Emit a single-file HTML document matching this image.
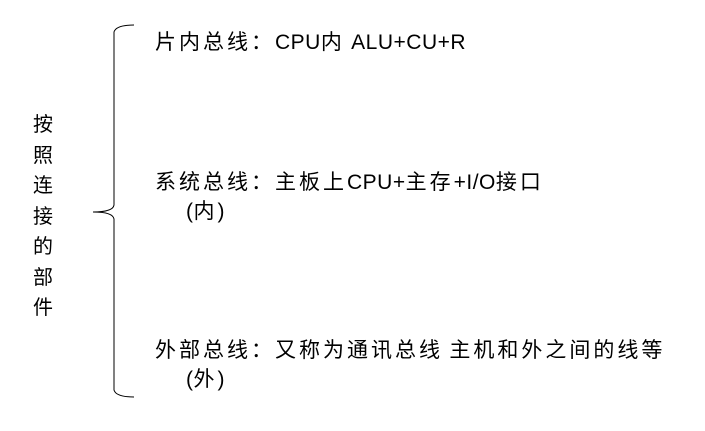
<!DOCTYPE html>
<html><head><meta charset="utf-8"><style>
body{margin:0;width:705px;height:431px;background:#fff;position:relative;overflow:hidden;font-family:"Liberation Sans","Noto Sans CJK SC",sans-serif;color:#000}
.t{position:absolute;font-size:21px;line-height:22px;white-space:nowrap;letter-spacing:3px}
.l{letter-spacing:0.5px}
.v{position:absolute;left:31px;top:110px;width:24px;font-size:20px;line-height:30.5px;text-align:center}
</style></head><body>
<svg width="705" height="431" style="position:absolute;left:0;top:0">
<path d="M134 25 Q116 25 114 32 L114 205 Q113 212 93 212 Q113 212 114 219 L114 390 Q116 397 134 397" fill="none" stroke="#000" stroke-width="1"/>
</svg>
<div class="v">按<br>照<br>连<br>接<br>的<br>部<br>件</div>
<div class="t" style="left:155px;top:32px">片内总线：<span class="l">CPU</span>内<span class="l"> ALU+CU+R</span></div>
<div class="t" style="left:155px;top:172px">系统总线：主板上<span class="l">CPU+</span>主存<span class="l">+I/O</span>接口</div>
<div class="t" style="left:186px;top:201px"><span class="l">(</span>内<span class="l">)</span></div>
<div class="t" style="left:155px;top:340px">外部总线：又称为通讯总线<span class="l"> </span>主机和外之间的线等</div>
<div class="t" style="left:186px;top:369px"><span class="l">(</span>外<span class="l">)</span></div>
</body></html>
